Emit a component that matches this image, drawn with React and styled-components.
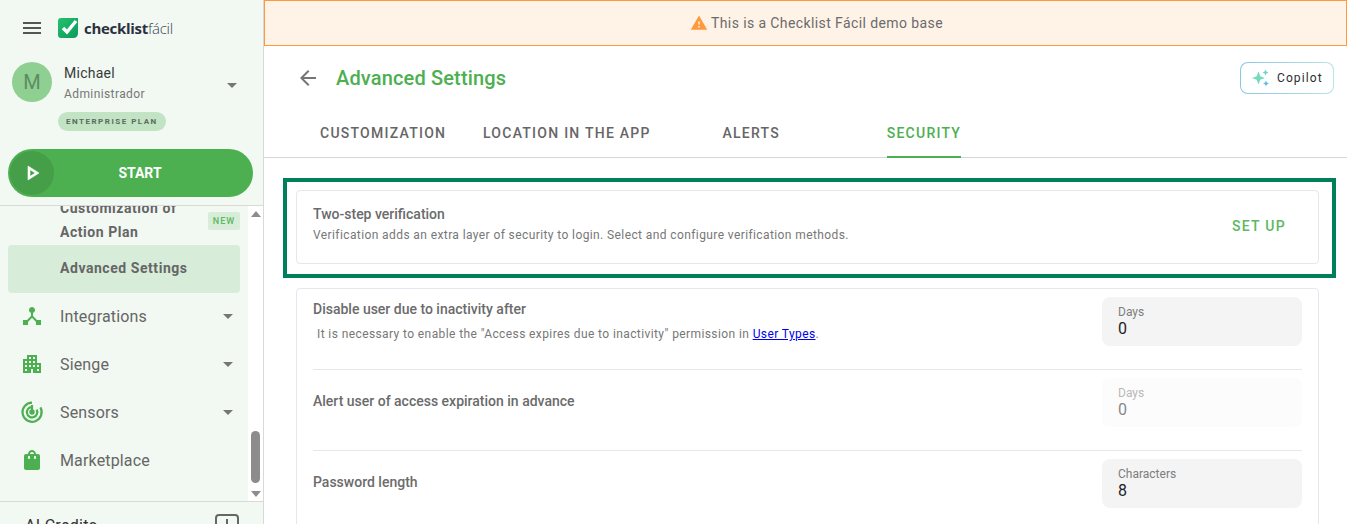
import React from 'react'
import styled, { createGlobalStyle } from 'styled-components'
import {
  MdMenu, MdArrowDropDown, MdOutlinePlayArrow, MdDeviceHub, MdApartment,
  MdShoppingBag, MdWarning, MdArrowBack,
} from 'react-icons/md'

const GlobalStyle = createGlobalStyle`
  html, body { margin: 0; height: 100%; overflow: hidden; background: #fff; }
  body { font-family: Roboto, "Liberation Sans", sans-serif; }
  * { box-sizing: border-box; }
`

const Shell = styled.div`
  display: flex;
  height: 524px;
  overflow: hidden;
`

const Sidebar = styled.aside`
  width: 264px;
  flex-shrink: 0;
  height: 524px;
  display: flex;
  flex-direction: column;
  background: #f2f8f2;
  border-right: 1px solid #d9d9d9;
  overflow: hidden;
`

const Brand = styled.div`
  display: flex;
  align-items: center;
  height: 56px;
  padding-left: 20px;
  flex-shrink: 0;
  color: #555;
`

const LogoMark = styled.svg`
  width: 20px;
  height: 20px;
  margin-left: 14px;
  margin-right: 6px;
`

const LogoText = styled.span`
  font-family: "Open Sans", sans-serif;
  font-size: 15px;
  letter-spacing: -0.3px;
  color: #2b3040;
  font-weight: 700;
  span { font-weight: 300; color: #3c4152; }
`

const UserRow = styled.div`
  display: flex;
  align-items: center;
  height: 40px;
  margin-top: 6px;
  padding-left: 12px;
  flex-shrink: 0;
`

const Avatar = styled.div`
  width: 40px;
  height: 40px;
  border-radius: 50%;
  background: #90cf92;
  color: #5c8d5f;
  font-size: 20px;
  display: flex;
  align-items: center;
  justify-content: center;
`

const UserInfo = styled.div`
  margin-left: 12px;
  flex: 1;
  align-self: flex-start;
  padding-top: 1px;
`

const UserName = styled.div`
  font-size: 14px;
  line-height: 20px;
  color: #3a3a3a;
  letter-spacing: 0.25px;
`

const UserRole = styled.div`
  font-size: 12px;
  line-height: 20px;
  margin-top: 1px;
  color: #777;
  letter-spacing: 0.4px;
`

const UserCaret = styled.div`
  color: #777;
  font-size: 24px;
  line-height: 0;
  margin-right: 19px;
  margin-top: 6px;
`

const PlanBadge = styled.div`
  align-self: flex-start;
  margin: 10px 0 0 58px;
  height: 19px;
  padding: 0 8px;
  border-radius: 10px;
  background: #c3e3c5;
  color: #5a6b5c;
  font-size: 8px;
  font-weight: 700;
  letter-spacing: 1.5px;
  line-height: 19px;
  flex-shrink: 0;
`

const StartButton = styled.div`
  margin: 18px 0 0 8px;
  width: 245px;
  height: 48px;
  flex-shrink: 0;
  border-radius: 24px;
  background: #4caf50;
  display: flex;
  align-items: center;
  padding: 0 27px 0 2px;
`

const StartCircle = styled.div`
  width: 44px;
  height: 44px;
  border-radius: 50%;
  background: #459e48;
  color: #fff;
  font-size: 24px;
  display: flex;
  align-items: center;
  justify-content: center;
  svg path:last-child { stroke: currentColor; stroke-width: 0.6px; }
`

const StartLabel = styled.div`
  flex: 1;
  text-align: center;
  color: #fff;
  font-size: 14px;
  font-weight: 700;
`

const NavArea = styled.div`
  margin-top: 8px;
  height: 297px;
  flex-shrink: 0;
  display: flex;
  border-top: 1px solid #d9d9d9;
  border-bottom: 1px solid #d9d9d9;
`

const NavScroll = styled.div`
  flex: 1;
  overflow: hidden;
`

const NavList = styled.div`
  margin-top: -10px;
`

const NavItem = styled.div`
  display: flex;
  align-items: center;
  margin-left: 8px;
  width: 232px;
  height: 48px;
  padding: 0 0 2px 12px;
  border-radius: 4px;
  color: #666;
  font-size: 16px;
  letter-spacing: 0.15px;
  svg.lead { color: #4caf50; font-size: 24px; margin-right: 16px; flex-shrink: 0; }
`

const SubItem = styled.div`
  display: flex;
  align-items: center;
  margin-left: 8px;
  width: 232px;
  height: ${(p) => p.$tall ? '49px' : '48px'};
  padding: 0 0 2px 52px;
  border-radius: 4px;
  background: ${(p) => p.$active ? '#d7edd9' : 'transparent'};
  color: #666;
  font-size: 14px;
  font-weight: 700;
  line-height: 24px;
  letter-spacing: 0.55px;
`

const SubLabel = styled.div`
  width: 140px;
`

const NewBadge = styled.div`
  margin-left: auto;
  margin-top: 2px;
  width: 32px;
  height: 18px;
  background: #d7edd9;
  border-radius: 2px;
  color: #5cb85f;
  font-size: 9px;
  font-weight: 500;
  letter-spacing: 1px;
  line-height: 18px;
  text-align: center;
`

const Caret = styled.div`
  margin-left: auto;
  margin-right: 0;
  color: #777;
  font-size: 24px;
  line-height: 0;
`

const Track = styled.div`
  width: 15px;
  background: #fff;
  display: flex;
  flex-direction: column;
  align-items: center;
`

const TrackArrow = styled.div`
  width: 0;
  height: 0;
  margin: ${(p) => p.$down ? '8px 0 4px' : '5px 0 0'};
  border-left: 5px solid transparent;
  border-right: 5px solid transparent;
  ${(p) => p.$down ? 'border-top: 6px solid #8c8c8c;' : 'border-bottom: 6px solid #8c8c8c;'}
`

const TrackThumb = styled.div`
  width: 9px;
  height: 52px;
  margin-top: auto;
  border-radius: 5px;
  background: #8c8c8c;
`

const Credits = styled.div`
  display: flex;
  align-items: flex-start;
  padding: 14px 24px 0 25px;
  color: #333;
  font-size: 16px;
  line-height: 20px;
  letter-spacing: 0.3px;
`

const CreditsBox = styled.div`
  margin-left: auto;
  margin-top: -2px;
  width: 24px;
  height: 24px;
  border: 2px solid #666;
  border-radius: 4px;
  display: flex;
  justify-content: center;
  padding-top: 3px;
  &::before { content: ''; width: 2px; height: 12px; background: #666; }
`

const Main = styled.main`
  flex: 1;
  min-width: 0;
  display: flex;
  flex-direction: column;
`

const Banner = styled.div`
  height: 46px;
  flex-shrink: 0;
  background: #fff3e8;
  border: 1px solid #ff9a3c;
  display: flex;
  align-items: center;
  justify-content: center;
  gap: 3px;
  padding-left: 22px;
  color: #6b6b6b;
  font-size: 14px;
  letter-spacing: 0.4px;
  svg { color: #ff9a3c; font-size: 18px; }
`

const TitleRow = styled.div`
  display: flex;
  align-items: center;
  height: 64px;
  padding: 0 13px 0 32px;
  flex-shrink: 0;
`

const BackIcon = styled(MdArrowBack)`
  font-size: 24px;
  color: #757575;
`

const Title = styled.h1`
  margin: 0 0 0 16px;
  font-size: 20px;
  font-weight: 500;
  color: #4caf50;
  letter-spacing: 0.15px;
`

const CopilotButton = styled.div`
  margin-left: auto;
  display: flex;
  align-items: center;
  gap: 6px;
  width: 94px;
  height: 32px;
  padding-left: 10px;
  border-radius: 8px;
  border: 1px solid transparent;
  background: linear-gradient(#fff, #fff) padding-box, linear-gradient(90deg, #8ac6e6, #b6e3e6) border-box;
  color: #2c2c2c;
  font-size: 12px;
  font-weight: 400;
  letter-spacing: 1.1px;
`

const TabBar = styled.nav`
  display: flex;
  height: 48px;
  padding-left: 56px;
  flex-shrink: 0;
  border-bottom: 1px solid #d6d6d6;
`

const Tab = styled.div`
  margin-left: ${(p) => p.$offset || 0}px;
  height: 48px;
  line-height: 46px;
  font-size: 14px;
  font-weight: 500;
  letter-spacing: 1.25px;
  color: ${(p) => p.$active ? '#4caf50' : '#666'};
  border-bottom: ${(p) => p.$active ? '2px solid #4caf50' : 'none'};
`

const Content = styled.div`
  padding: 20px 28px 0 32px;
`

const Highlight = styled.div`
  margin: 0 -17px 0 -13px;
  padding: 8px 13px 10px 9px;
  border: 4px solid #00805a;
`

const Card = styled.section`
  border: 1px solid #e6e6ee;
  border-radius: 4px;
  padding: ${(p) => p.$flush ? '0 16px' : '0'};
  margin-top: ${(p) => p.$gap || 0}px;
`

const VerifyRow = styled.div`
  display: flex;
  align-items: center;
  height: 72px;
  padding: 0 32px 0 16px;
`

const RowText = styled.div`
  flex: 1;
  margin-bottom: 6px;
`

const FieldTitle = styled.div`
  font-size: 14px;
  font-weight: 500;
  line-height: 20px;
  color: #6b6b6b;
`

const FieldHint = styled.div`
  font-size: 12px;
  line-height: 20px;
  color: #777;
  letter-spacing: 0.4px;
  padding-left: ${(p) => p.$indent || 0}px;
  margin-top: ${(p) => p.$top || 0}px;
  a { color: #0000ee; }
`

const SetUp = styled.div`
  font-size: 14px;
  font-weight: 500;
  letter-spacing: 1.3px;
  margin-bottom: 2px;
  color: #5cb85f;
`

const SettingRow = styled.div`
  display: flex;
  height: ${(p) => p.$first ? '80px' : '81px'};
  padding-top: 8px;
  border-top: ${(p) => p.$first ? 'none' : '1px solid #e6e6ee'};
`

const SettingText = styled.div`
  flex: 1;
  padding-top: ${(p) => p.$pad || 0}px;
`

const NumberField = styled.div`
  width: 200px;
  height: 49px;
  padding: 7px 16px 0;
  border-radius: 8px;
  background: ${(p) => p.$disabled ? '#fafafa' : '#f4f4f4'};
  opacity: ${(p) => p.$disabled ? 0.55 : 1};
`

const FieldLabel = styled.div`
  font-size: 12px;
  line-height: 16px;
  color: #7d7d7d;
`

const FieldValue = styled.div`
  font-size: 16px;
  line-height: 18px;
  color: #222;
`

const settings = [
  { title: 'Disable user due to inactivity after', label: 'Days', value: '0', pad: 2 },
  { title: 'Alert user of access expiration in advance', label: 'Days', value: '0', pad: 13, disabled: true },
  { title: 'Password length', label: 'Characters', value: '8', pad: 13 },
]

const Sparkle = () => (
  <svg width="20" height="18" viewBox="0 0 20 18">
    <path d="M7.5 2.5 L9.3 7.2 L14 9 L9.3 10.8 L7.5 15.5 L5.7 10.8 L1 9 L5.7 7.2Z" fill="#74dcbc" />
    <path d="M14.5 0.5 L15.4 2.6 L17.5 3.5 L15.4 4.4 L14.5 6.5 L13.6 4.4 L11.5 3.5 L13.6 2.6Z" fill="#74d2cc" />
    <path d="M15 11.5 L15.9 13.6 L18 14.5 L15.9 15.4 L15 17.5 L14.1 15.4 L12 14.5 L14.1 13.6Z" fill="#62c0d8" />
  </svg>
)

// radar with the opening at the top right, as in the reference
const SensorIcon = () => (
  <svg className="lead" width="24" height="24" viewBox="0 0 24 24" fill="none" stroke="currentColor" strokeWidth="2.2">
    <path d="M12 2.6 A9.6 9.6 0 1 0 20.4 7.4" />
    <path d="M12 7 A5.2 5.2 0 1 0 16.6 9.6" />
    <path d="M12 5 V12" />
    <circle cx="12" cy="12" r="1.6" fill="currentColor" />
  </svg>
)

function App() {
  return (
    <Shell>
      <GlobalStyle />
      <Sidebar>
        <Brand>
          <MdMenu size={24} />
          <LogoMark viewBox="0 0 20 20">
            <defs>
              <linearGradient id="logoGreen" x1="0" y1="0" x2="1" y2="1">
                <stop offset="0" stopColor="#25c16f" />
                <stop offset="1" stopColor="#0b9a5b" />
              </linearGradient>
            </defs>
            <path d="M0 3 Q0 0 3 0 H20 V15 Q20 20 15 20 H3 Q0 20 0 17Z" fill="url(#logoGreen)" />
            <path d="M5 10 L9 14 L18 3" fill="none" stroke="#fff" strokeWidth="3.4" />
          </LogoMark>
          <LogoText>checklist<span>fácil</span></LogoText>
        </Brand>
        <UserRow>
          <Avatar>M</Avatar>
          <UserInfo>
            <UserName>Michael</UserName>
            <UserRole>Administrador</UserRole>
          </UserInfo>
          <UserCaret><MdArrowDropDown /></UserCaret>
        </UserRow>
        <PlanBadge>ENTERPRISE PLAN</PlanBadge>
        <StartButton>
          <StartCircle><MdOutlinePlayArrow /></StartCircle>
          <StartLabel>START</StartLabel>
        </StartButton>
        <NavArea>
          <NavScroll>
            <NavList>
              <SubItem $tall>
                <SubLabel>Customization of Action Plan</SubLabel>
                <NewBadge>NEW</NewBadge>
              </SubItem>
              <SubItem $active>Advanced Settings</SubItem>
              <NavItem><MdDeviceHub className="lead" />Integrations<Caret><MdArrowDropDown /></Caret></NavItem>
              <NavItem><MdApartment className="lead" />Sienge<Caret><MdArrowDropDown /></Caret></NavItem>
              <NavItem><SensorIcon />Sensors<Caret><MdArrowDropDown /></Caret></NavItem>
              <NavItem><MdShoppingBag className="lead" />Marketplace</NavItem>
            </NavList>
          </NavScroll>
          <Track>
            <TrackArrow />
            <TrackThumb />
            <TrackArrow $down />
          </Track>
        </NavArea>
        <Credits>
          AI Credits
          <CreditsBox />
        </Credits>
      </Sidebar>
      <Main>
        <Banner><MdWarning />This is a Checklist Fácil demo base</Banner>
        <TitleRow>
          <BackIcon />
          <Title>Advanced Settings</Title>
          <CopilotButton><Sparkle />Copilot</CopilotButton>
        </TitleRow>
        <TabBar>
          <Tab>CUSTOMIZATION</Tab>
          <Tab $offset={36.75}>LOCATION IN THE APP</Tab>
          <Tab $offset={71.75}>ALERTS</Tab>
          <Tab $offset={106.75} $active>SECURITY</Tab>
        </TabBar>
        <Content>
          <Highlight>
            <Card>
              <VerifyRow>
                <RowText>
                  <FieldTitle>Two-step verification</FieldTitle>
                  <FieldHint $top={1}>Verification adds an extra layer of security to login. Select and configure verification methods.</FieldHint>
                </RowText>
                <SetUp>SET UP</SetUp>
              </VerifyRow>
            </Card>
          </Highlight>
          <Card $flush $gap={10}>
            {settings.map((s, i) => (
              <SettingRow key={s.title} $first={i === 0}>
                <SettingText $pad={s.pad}>
                  <FieldTitle>{s.title}</FieldTitle>
                  {i === 0 && (
                    <FieldHint $indent={4} $top={5}>
                      It is necessary to enable the "Access expires due to inactivity" permission in <a href="#user-types">User Types</a>.
                    </FieldHint>
                  )}
                </SettingText>
                <NumberField $disabled={s.disabled}>
                  <FieldLabel>{s.label}</FieldLabel>
                  <FieldValue>{s.value}</FieldValue>
                </NumberField>
              </SettingRow>
            ))}
          </Card>
        </Content>
      </Main>
    </Shell>
  )
}

export default App
